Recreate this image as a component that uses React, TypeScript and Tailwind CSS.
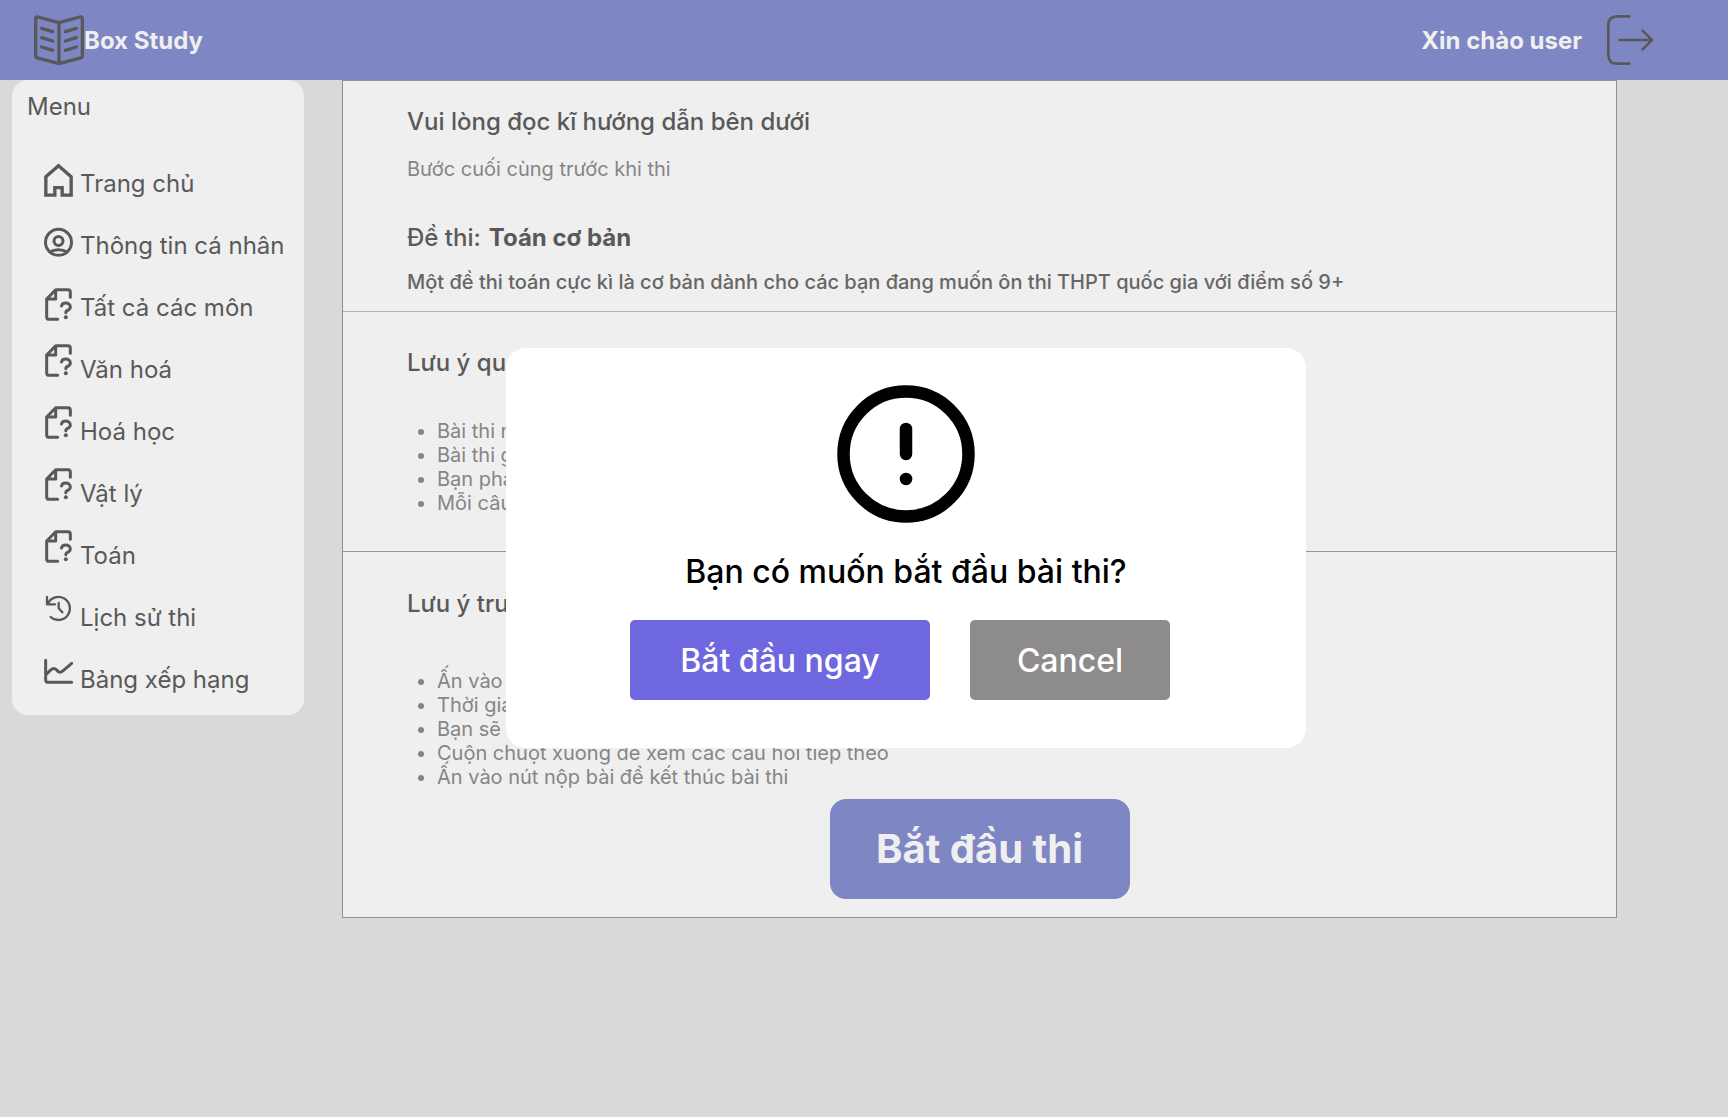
import type { ReactNode } from "react";
import { CircleAlert } from "lucide-react";

function BookLogo() {
  return (
    <svg className="size-[50px] shrink-0" viewBox="0 0 150 150" fill="none" stroke="#595959" strokeWidth="10" strokeLinecap="round" strokeLinejoin="round" aria-hidden="true">
      <path d="M75 23L12 6Q5 4.500 5 11V122q0 5 5 6.500L75 146l65-17.500q5-1.500 5-6.500V11Q145 4.500 138 6ZM75 23V146" />
      <path d="M23 40l33 10M23 68l33 10M23 96l33 10M127 40L94 50M127 68L94 78M127 96L94 106" />
    </svg>
  );
}

function LogoutIcon() {
  return (
    <svg className="h-[50px] w-[47px]" viewBox="0 0 141 150" fill="none" stroke="#595959" strokeWidth="8" strokeLinecap="round" strokeLinejoin="round" aria-hidden="true">
      <path d="M67 4H31Q4 4 4 31V119Q4 146 31 146H67M37 75H135M107 47L135 75L107 103" />
    </svg>
  );
}

function MenuIcon({ children, width = 9 }: { children: ReactNode; width?: number }) {
  return (
    <svg className="size-[34px] overflow-visible" viewBox="0 0 102 102" fill="none" stroke="currentColor" strokeWidth={width} strokeLinecap="round" strokeLinejoin="round" aria-hidden="true">
      {children}
    </svg>
  );
}

function HomeIcon() {
  return (
    <MenuIcon width={10}>
      <path strokeLinejoin="miter" d="M38.500 93.500V71H60.500V93.500H87.500V38L49.500 5L11.500 38V93.500Z" />
    </MenuIcon>
  );
}

function ProfileIcon() {
  return (
    <MenuIcon>
      <circle cx="49.500" cy="49" r="39" />
      <circle cx="49.500" cy="45" r="13.500" />
      <path d="M24 78C31 73 40 71 49.500 71S68 73 75 78" />
    </MenuIcon>
  );
}

function ExamIcon() {
  return (
    <MenuIcon>
      <path d="M85 28V12Q85 5 78 5H41L14 33V86Q14 94 22 94H47M41 5V33H14" />
      <path d="M58.500 54C60 46 66 45 71 45C79 45 85 50 85 57C85 65 77 67 73 69.500C71.500 70.500 71.500 72 71.500 74" />
      <circle cx="71.500" cy="88" r="6" fill="currentColor" stroke="none" />
    </MenuIcon>
  );
}

function HistoryIcon() {
  return (
    <MenuIcon width={7}>
      <path d="M15 15V37H39M17 37A34.500 34.500 0 1 1 26 75M50 33V49L61 61" />
    </MenuIcon>
  );
}

function ChartIcon() {
  return (
    <MenuIcon>
      <path d="M11 19V77Q11 85 19 85H89M11 63L27 47Q35 40 43 47L48 52Q54 57 61 52L89 28" />
    </MenuIcon>
  );
}

const menu = [
  { label: "Trang chủ", icon: <HomeIcon />, low: true },
  { label: "Thông tin cá nhân", icon: <ProfileIcon />, low: true },
  { label: "Tất cả các môn", icon: <ExamIcon />, low: true },
  { label: "Văn hoá", icon: <ExamIcon /> },
  { label: "Hoá học", icon: <ExamIcon /> },
  { label: "Vật lý", icon: <ExamIcon /> },
  { label: "Toán", icon: <ExamIcon /> },
  { label: "Lịch sử thi", icon: <HistoryIcon /> },
  { label: "Bảng xếp hạng", icon: <ChartIcon /> },
];

function Sidebar() {
  return (
    <aside className="w-[292px] shrink-0 rounded-2xl bg-[#efefef] pt-3 pb-[21px] text-2xl leading-[29px]">
      <h2 className="pl-[15px]">Menu</h2>
      <nav className="mt-[37px] flex flex-col gap-[22px] pl-[30px]">
        {menu.map((item) => (
          <a key={item.label} href="#" className="flex h-10 items-end gap-1 whitespace-nowrap">
            <span className={item.low ? "self-end" : "self-start"}>{item.icon}</span>
            {item.label}
          </a>
        ))}
      </nav>
    </aside>
  );
}

function NoteList({ items }: { items: string[] }) {
  return (
    <ul className="list-disc pl-[30px] text-xl leading-6 text-[#858585]">
      {items.map((item) => (
        <li key={item}>{item}</li>
      ))}
    </ul>
  );
}

function ConfirmDialog() {
  return (
    <div className="absolute inset-x-0 top-[348px] flex justify-center pl-[84px]">
      <div role="dialog" aria-labelledby="confirm-title" className="flex w-[800px] flex-col items-center rounded-[20px] bg-white pt-[31px] pb-12">
        <CircleAlert className="size-[150px] text-black" aria-hidden="true" />
        <h2 id="confirm-title" className="mt-[23px] text-[32px] leading-[39px] font-medium text-black">
          Bạn có muốn bắt đầu bài thi?
        </h2>
        <div className="mt-[29px] flex gap-10 pr-3 text-[32px] leading-[39px] font-medium text-white">
          <button type="button" className="h-20 w-[300px] rounded-[5px] bg-[#6f67e0]">Bắt đầu ngay</button>
          <button type="button" className="h-20 w-[200px] rounded-[5px] bg-[#8d8b8c]">Cancel</button>
        </div>
      </div>
    </div>
  );
}

export default function App() {
  return (
    <div className="relative min-h-screen bg-[#d9d9d9] font-['Inter',sans-serif] text-[#595959]">
      <header className="flex h-20 items-center justify-between bg-[#7e87c3] pr-[74px] pl-[34px] text-2xl leading-[29px] font-bold text-[#efefef]">
        <a href="#" className="flex items-center">
          <BookLogo />
          Box Study
        </a>
        <div className="flex items-center gap-[25px]">
          <span>Xin chào user</span>
          <button type="button" aria-label="Đăng xuất">
            <LogoutIcon />
          </button>
        </div>
      </header>

      <div className="flex items-start gap-[38px] pr-[111px] pl-3">
        <Sidebar />
        <main className="min-w-0 flex-1 border border-[#8f9190] bg-[#efefef]">
          <section className="border-b border-[#b0b0b0] px-16 pt-[26px] pb-[17px]">
            <h1 className="text-2xl leading-[29px] font-medium">Vui lòng đọc kĩ hướng dẫn bên dưới</h1>
            <p className="mt-[21px] text-xl leading-6 text-[#858585]">Bước cuối cùng trước khi thi</p>
            <p className="mt-[42px] flex gap-2 text-2xl leading-[29px] font-medium">
              Đề thi: <strong className="font-bold">Toán cơ bản</strong>
            </p>
            <p className="mt-[18px] text-xl leading-6 font-medium text-[#666666]">
              Một đề thi toán cực kì là cơ bản dành cho các bạn đang muốn ôn thi THPT quốc gia với điểm số 9+
            </p>
          </section>
          <section className="border-b border-[#979797] px-16 py-9">
            <h2 className="mb-[42px] text-2xl leading-[29px] font-medium">Lưu ý quan trọng</h2>
            <NoteList
              items={[
                "Bài thi này có giới hạn thời gian",
                "Bài thi gồm các câu hỏi trắc nghiệm",
                "Bạn phải trả lời tất cả các câu hỏi",
                "Mỗi câu hỏi có một đáp án đúng",
              ]}
            />
          </section>
          <section className="px-16 pt-[37px] pb-[18px]">
            <h2 className="mb-[51px] text-2xl leading-[29px] font-medium">Lưu ý trước khi thi</h2>
            <NoteList
              items={[
                "Ấn vào nút bắt đầu để làm bài",
                "Thời gian sẽ được tính ngay",
                "Bạn sẽ thấy câu hỏi và đáp án",
                "Cuộn chuột xuống để xem các câu hỏi tiếp theo",
                "Ấn vào nút nộp bài để kết thúc bài thi",
              ]}
            />
            <button type="button" className="mx-auto mt-[10px] block h-[100px] w-[300px] rounded-2xl bg-[#7e87c3] text-[40px] leading-[48px] font-bold text-[#efefef]">
              Bắt đầu thi
            </button>
          </section>
        </main>
      </div>

      <ConfirmDialog />
    </div>
  );
}
